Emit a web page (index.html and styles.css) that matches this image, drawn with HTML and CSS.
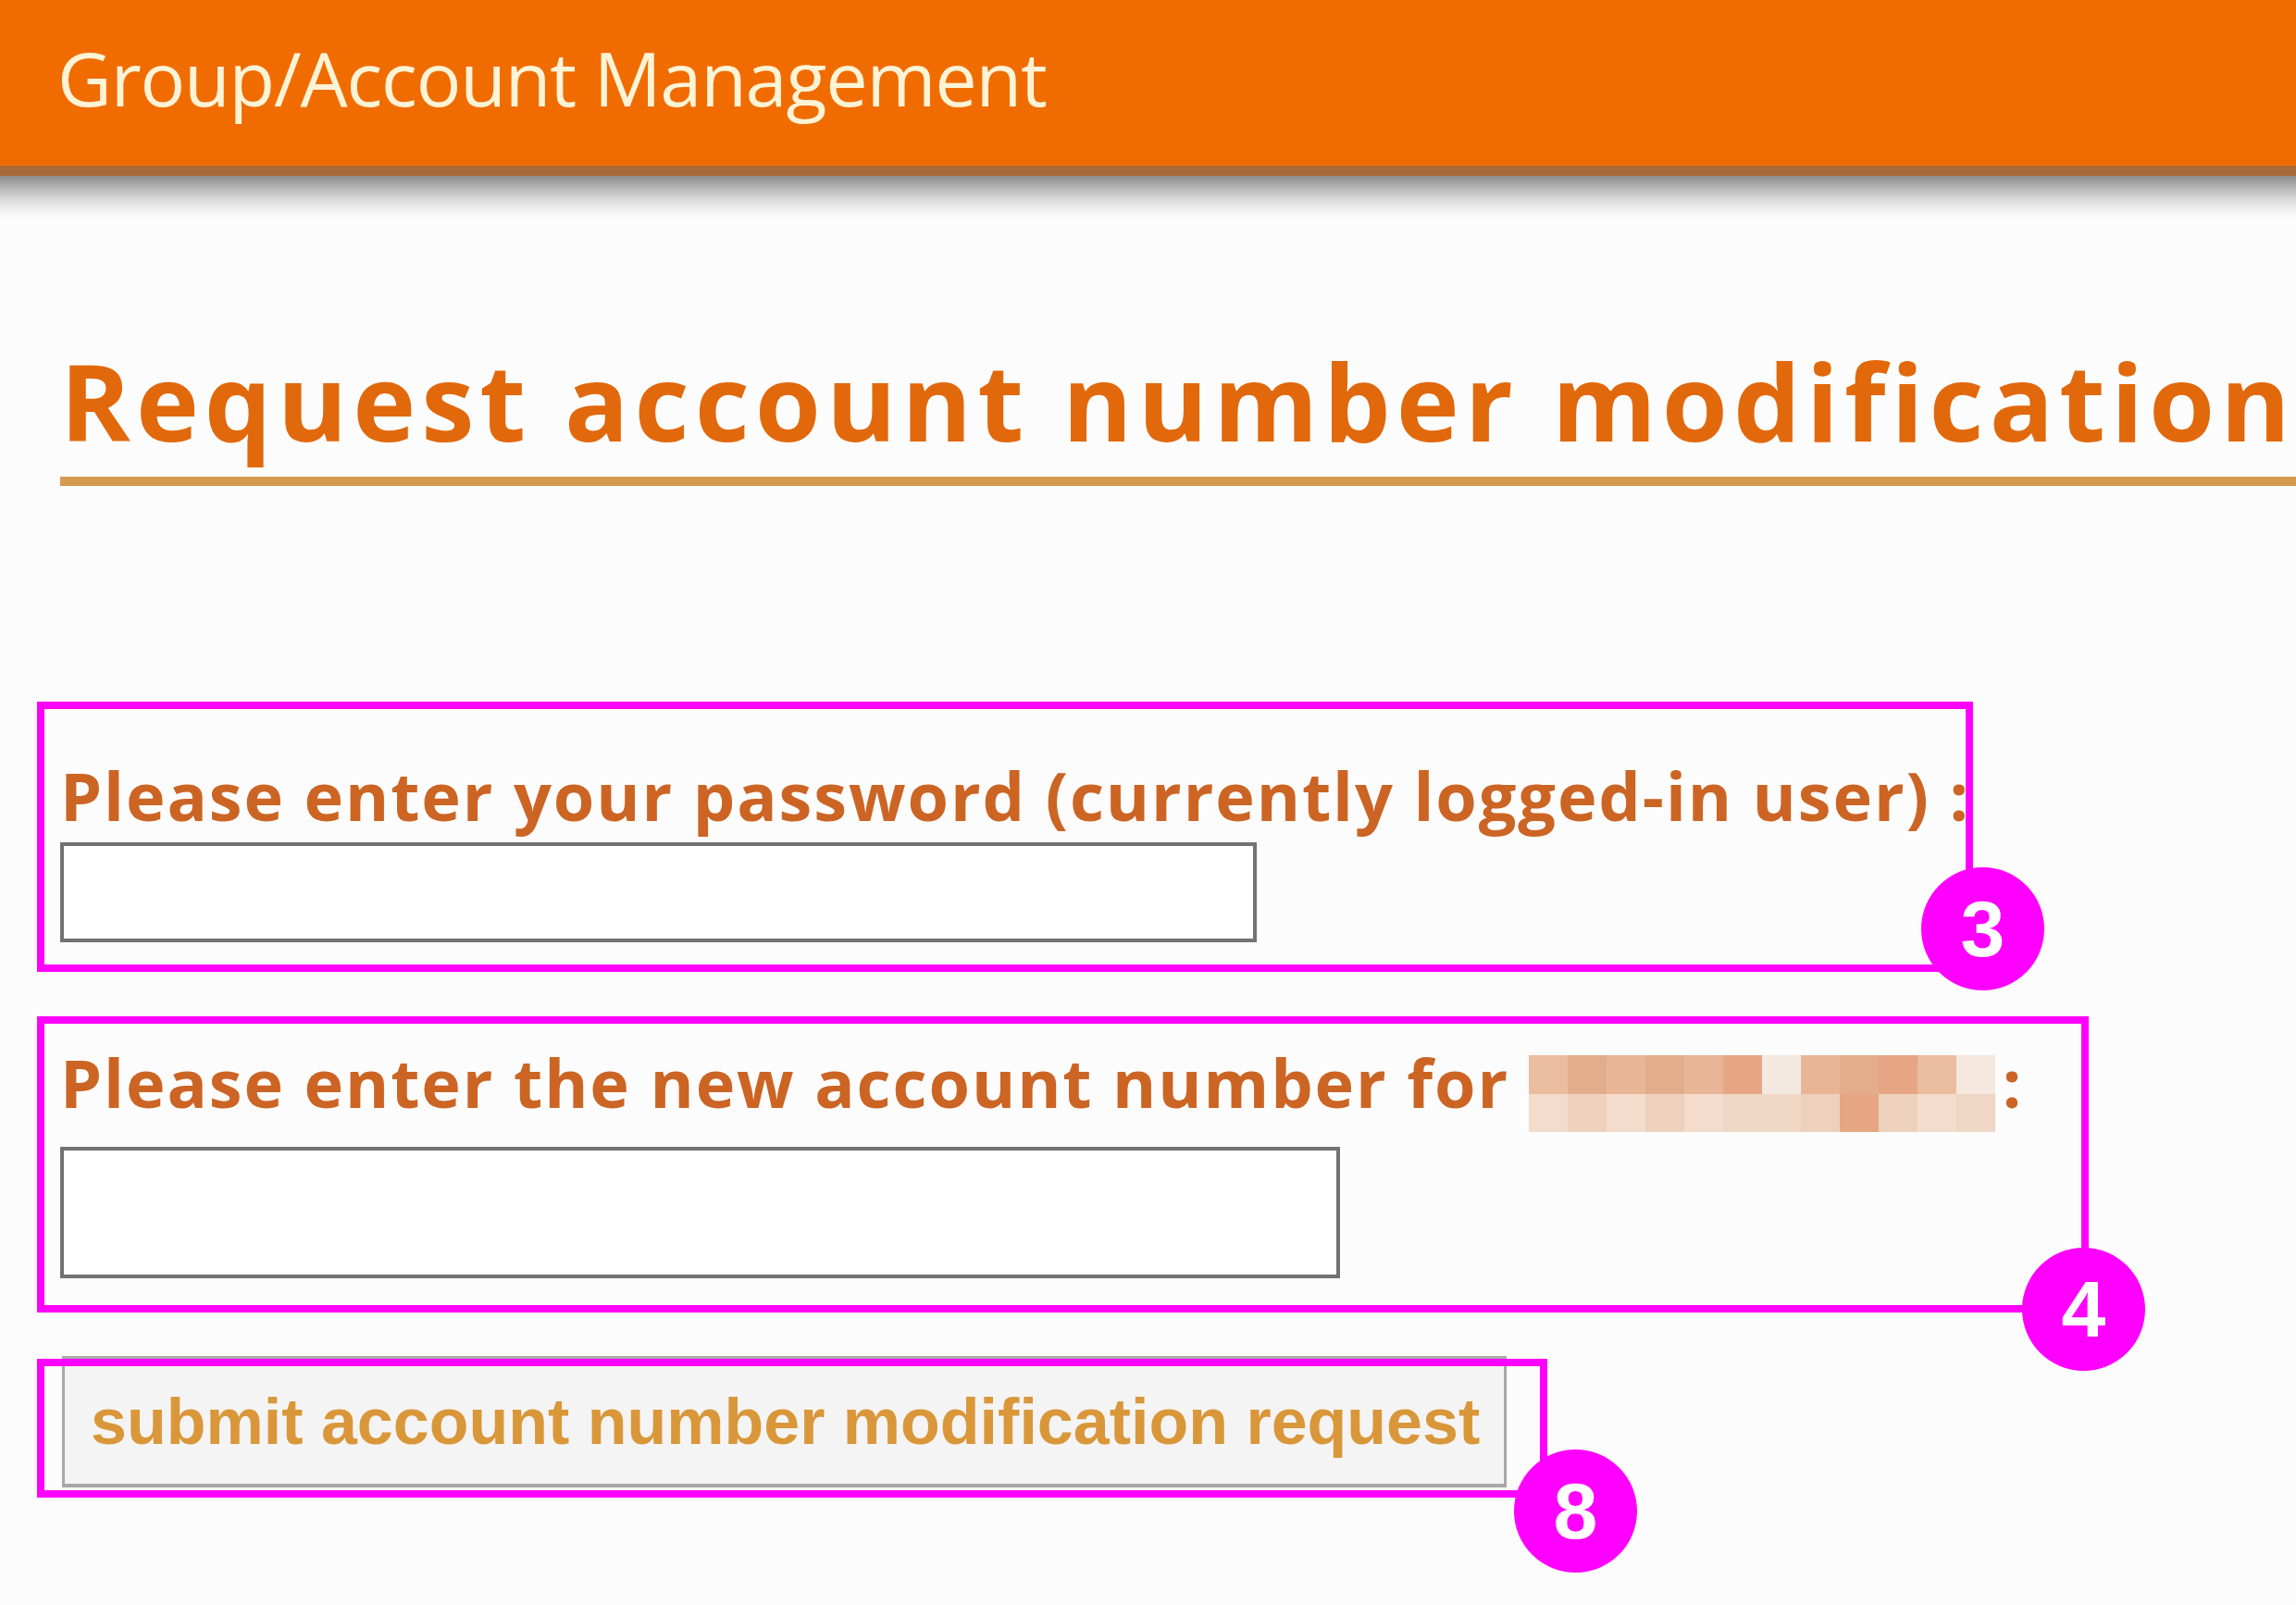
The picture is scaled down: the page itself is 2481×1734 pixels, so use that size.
FILE: index.html
```html
<!DOCTYPE html>
<html lang="en">
<head>
<meta charset="utf-8">
<title>Group/Account Management</title>
<link rel="stylesheet" href="styles.css">
</head>
<body>
<header class="topbar">
  <div class="topbar-title">Group/Account Management</div>
</header>
<main class="content">
  <h1 class="page-title">Request account number modification</h1>

  <section class="callout callout-password">
    <label class="field-label" for="pw">Please enter your password (currently logged-in user) :</label>
    <input class="field-input input-password" id="pw" type="password">
    <span class="badge badge-3">3</span>
  </section>

  <section class="callout callout-account">
    <label class="field-label label-account" for="acc">Please enter the new account number for <span class="redacted" aria-hidden="true"><span class="redacted-grid"><i class="px p1"></i><i class="px p2"></i><i class="px p3"></i><i class="px p2"></i><i class="px p3"></i><i class="px p4"></i><i class="px p7"></i><i class="px p3"></i><i class="px p2"></i><i class="px p4"></i><i class="px p1"></i><i class="px p8"></i><i class="px p5"></i><i class="px p6"></i><i class="px p5"></i><i class="px p6"></i><i class="px p5"></i><i class="px p9"></i><i class="px p9"></i><i class="px p6"></i><i class="px p4"></i><i class="px p6"></i><i class="px p5"></i><i class="px p9"></i></span></span>:</label>
    <input class="field-input input-account" id="acc" type="text">
    <span class="badge badge-4">4</span>
  </section>

  <section class="callout callout-submit">
    <button class="submit-btn" type="button">submit account number modification request</button>
    <span class="badge badge-8">8</span>
  </section>
</main>
</body>
</html>
```

FILE: styles.css
```css
html, body {
  margin: 0;
  padding: 0;
  overflow: hidden;
}

body {
  background: #fcfcfc;
  font-family: "Open Sans", "Liberation Sans", sans-serif;
  width: 2481px;
  height: 1734px;
}

/* ---------- top bar ---------- */
.topbar {
  background: #f06c00;
  height: 190px;
  box-sizing: border-box;
  padding: 28px 0 0 62px;
  border-bottom: 11px solid #a86a38;
}

.topbar-title {
  font-size: 81px;
  line-height: normal;
  color: #fff3d6;
  letter-spacing: -1.2px;
}

.content {
  padding: 1px 0 0 40px;
  background: linear-gradient(#8c8c8c 0px, #b9b9b9 14px, #dcdcdc 26px, #f6f6f6 40px, #fcfcfc 48px);
  background-repeat: no-repeat;
  background-size: 100% 48px;
}

/* ---------- title ---------- */
.page-title {
  margin: 184px 0 0 25px;
  font-size: 115px;
  font-weight: 700;
  line-height: 115px;
  color: #e2680c;
  white-space: nowrap;
  padding-bottom: 25px;
  border-bottom: 10px solid #d49a50;
  letter-spacing: 6px;
}

/* ---------- callouts ---------- */
.callout {
  position: relative;
  box-sizing: border-box;
  padding: 8px 0 8px 25px;
}

.callout::before {
  content: "";
  position: absolute;
  inset: 0;
  border: 8px solid #ff00ff;
  pointer-events: none;
}

.callout-password {
  margin-top: 233px;
  width: 2092px;
  padding-top: 56px;
  padding-bottom: 32px;
}

.callout-account {
  margin-top: 48px;
  width: 2217px;
  padding-top: 26px;
  padding-bottom: 37px;
}

.callout-submit {
  margin-top: 50px;
  width: 1632px;
  padding-left: 27px;
  padding-bottom: 11px;
}

.field-label {
  display: block;
  font-size: 72px;
  font-weight: 700;
  line-height: 90px;
  color: #cc6424;
  letter-spacing: 1.9px;
  white-space: nowrap;
  margin-bottom: 6px;
}

.label-account {
  margin-bottom: 16px;
}

.redacted {
  display: inline-block;
  overflow: hidden;
  vertical-align: -26px;
  margin-right: 8px;
}

.redacted-grid {
  display: grid;
  grid-template-columns: repeat(12, 42px);
  grid-template-rows: 42px 41px;
}

.px { display: block; }
.p1 { background: #ebbd9f; }
.p2 { background: #e3ad8c; }
.p3 { background: #e8b697; }
.p4 { background: #e6a684; }
.p5 { background: #f3dccb; }
.p6 { background: #eed1bd; }
.p7 { background: #f3e9e1; }
.p8 { background: #f5e8de; }
.p9 { background: #f0d6c4; }

.field-input {
  display: block;
  box-sizing: border-box;
  margin: 0;
  padding: 0 16px;
  border: 4px solid #727272;
  border-radius: 0;
  background: #ffffff;
  font-size: 40px;
  outline: none;
}

.input-password {
  width: 1293px;
  height: 108px;
}

.input-account {
  width: 1383px;
  height: 142px;
}

/* ---------- submit ---------- */
.submit-btn {
  display: block;
  box-sizing: border-box;
  margin: -11px 0 0 0;
  width: 1561px;
  height: 142px;
  padding: 0 28px;
  background: #f4f4f4;
  border: 3px solid #a8a8a8;
  border-bottom-width: 4px;
  border-radius: 0;
  font-family: "Liberation Sans", Arial, sans-serif;
  font-weight: 700;
  font-size: 70px;
  color: #d9973a;
  text-align: center;
  white-space: nowrap;
}

/* ---------- badges ---------- */
.badge {
  position: absolute;
  width: 133px;
  height: 133px;
  border-radius: 50%;
  background: #ff00ff;
  color: #ffffff;
  font-family: "Liberation Sans", Arial, sans-serif;
  font-weight: 700;
  font-size: 86px;
  line-height: 133px;
  text-align: center;
}

.badge-3 { right: -77px; bottom: -20px; }
.badge-4 { right: -61px; bottom: -63px; }
.badge-8 { right: -97px; bottom: -81px; }
```
